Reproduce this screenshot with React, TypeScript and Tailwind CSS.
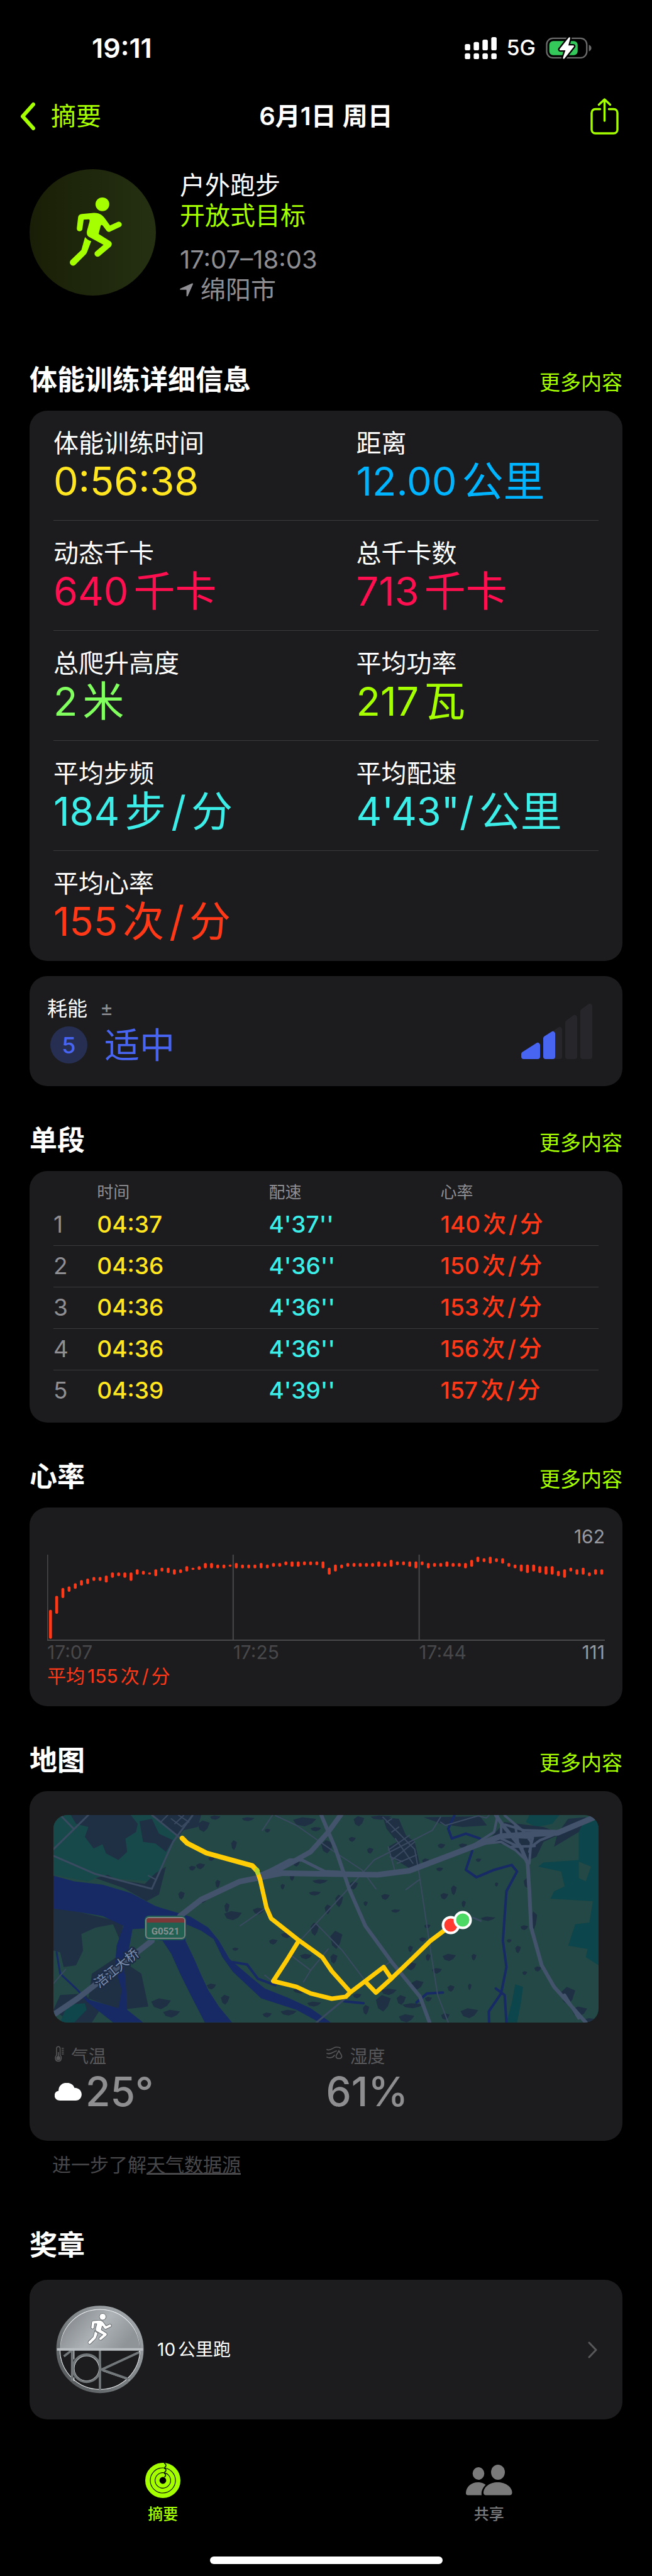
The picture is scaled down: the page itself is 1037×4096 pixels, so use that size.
import type { ReactNode } from 'react';
import clsx from 'clsx';

interface Metric {
  label: string;
  value: string;
  unit?: string[];
  color: string;
}

const metrics: Metric[] = [
  { label: '体能训练时间', value: '0:56:38', color: 'text-[#ffe620]' },
  { label: '距离', value: '12.00', unit: ['公里'], color: 'text-[#00b4ff]' },
  { label: '动态千卡', value: '640', unit: ['千卡'], color: 'text-[#ff0f4f]' },
  { label: '总千卡数', value: '713', unit: ['千卡'], color: 'text-[#ff0f4f]' },
  { label: '总爬升高度', value: '2', unit: ['米'], color: 'text-[#80ff5f]' },
  { label: '平均功率', value: '217', unit: ['瓦'], color: 'text-[#a6ff00]' },
  { label: '平均步频', value: '184', unit: ['步', '/', '分'], color: 'text-[#3deee8]' },
  { label: '平均配速', value: '4\'43"/', unit: ['公里'], color: 'text-[#3deee8]' },
  { label: '平均心率', value: '155', unit: ['次', '/', '分'], color: 'text-[#ff3818]' },
];

const splits = [
  { time: '04:37', pace: "4'37''", bpm: 140 },
  { time: '04:36', pace: "4'36''", bpm: 150 },
  { time: '04:36', pace: "4'36''", bpm: 153 },
  { time: '04:36', pace: "4'36''", bpm: 156 },
  { time: '04:39', pace: "4'39''", bpm: 157 },
];

// [high, low] bpm for each time slot
const heartRate = [
  [128, 111], [137, 127], [142, 137], [143, 141], [145, 143], [147, 145], [148, 146], [149, 148], [149, 148],
  [150, 147], [152, 150], [152, 151], [152, 150], [152, 148], [154, 152], [153, 152], [152, 152], [154, 151],
  [155, 154], [155, 153], [154, 152], [154, 153], [156, 154], [155, 155], [156, 155], [158, 156], [158, 156],
  [157, 156], [157, 156], [157, 157], [158, 156], [157, 156], [157, 156], [157, 156], [158, 156], [157, 156],
  [158, 157], [158, 157], [159, 158], [159, 157], [159, 157], [159, 158], [159, 158], [159, 158], [159, 156],
  [155, 152], [157, 154], [157, 156], [158, 157], [158, 157], [158, 157], [158, 157], [158, 157], [159, 157],
  [158, 157], [160, 157], [159, 158], [159, 158], [159, 157], [159, 156], [159, 158], [158, 156], [158, 157],
  [158, 157], [159, 157], [158, 157], [158, 157], [158, 156], [160, 157], [162, 160], [161, 160], [162, 159],
  [161, 160], [161, 159], [158, 157], [157, 156], [157, 154], [157, 153], [157, 154], [156, 153], [156, 152],
  [156, 152], [153, 151], [154, 150], [155, 154], [154, 152], [155, 152], [152, 151], [154, 152], [154, 152],
];

// small built-up areas on the map: x, y, width, height
const blocks = [
  [420, 70, 34, 70], [455, 40, 30, 26], [545, 50, 36, 24], [515, 190, 16, 60], [450, 290, 18, 26], [415, 330, 26, 36],
  [690, 50, 66, 56], [740, 110, 30, 26], [862, 44, 30, 62], [910, 40, 60, 26], [770, 190, 34, 80], [395, 345, 20, 30],
  [470, 430, 14, 50], [365, 500, 18, 50], [422, 545, 24, 26], [496, 570, 14, 60], [495, 620, 50, 56], [576, 600, 34, 40],
  [680, 378, 16, 60], [655, 455, 12, 34], [745, 428, 44, 26], [735, 500, 34, 26], [810, 520, 22, 76], [780, 580, 18, 60],
  [740, 690, 24, 80], [796, 740, 34, 110], [656, 750, 34, 34], [622, 790, 24, 34], [710, 880, 34, 32], [518, 842, 18, 20],
  [850, 440, 24, 50], [880, 380, 40, 24], [940, 516, 24, 36], [968, 610, 26, 20], [890, 560, 12, 30], [1096, 355, 20, 24],
  [1138, 464, 16, 60], [1108, 510, 22, 40], [1168, 556, 12, 42], [1160, 210, 24, 26], [1100, 210, 22, 30], [1262, 446, 10, 26],
  [1344, 420, 20, 60], [1364, 622, 18, 110], [1335, 706, 22, 30], [1222, 654, 42, 26], [1062, 700, 18, 26], [1048, 780, 20, 26],
  [1016, 830, 14, 40], [1066, 880, 14, 44], [1114, 880, 38, 44], [1196, 880, 14, 40], [1296, 790, 14, 22], [1320, 830, 16, 46],
  [1010, 930, 30, 50], [1084, 966, 28, 34], [1340, 985, 14, 24], [1026, 1040, 34, 56], [1128, 1070, 20, 40], [1186, 1060, 10, 40],
  [940, 1090, 44, 40], [925, 1130, 42, 100], [984, 1130, 26, 60], [1000, 1180, 60, 30], [888, 1190, 18, 60], [860, 1120, 24, 30],
  [1165, 1210, 50, 60], [1110, 1240, 24, 40], [990, 1246, 44, 50], [655, 1220, 46, 34], [604, 1236, 26, 30], [486, 1128, 24, 60],
  [446, 1060, 26, 36], [414, 1020, 12, 40], [288, 1150, 56, 66], [322, 1220, 48, 46], [690, 1090, 44, 30], [730, 1170, 40, 30],
  [1374, 956, 20, 32], [1450, 1080, 40, 110], [1480, 1200, 44, 60], [1516, 1270, 30, 26], [610, 120, 16, 24], [690, 310, 20, 40],
  [1056, 300, 20, 36], [900, 236, 18, 36], [848, 170, 20, 30], [1208, 300, 16, 22], [1064, 1140, 20, 30], [796, 880, 20, 60],
];

function SectionHeader({ title, more = true }: { title: string; more?: boolean }) {
  return (
    <div className="flex items-baseline justify-between">
      <h2 className="text-[44px] leading-[52px] font-bold">{title}</h2>
      {more && (
        <a href="#" className="text-[33px] leading-[52px] text-[#a6ff00]">
          更多内容
        </a>
      )}
    </div>
  );
}

function Card({ className, children }: { className?: string; children: ReactNode }) {
  return <div className={clsx('rounded-[28px] bg-[#1c1c1e]', className)}>{children}</div>;
}

const RUNNER_BODY =
  'M103 161L175 154C210 152 232 170 243 188L274 231L322 209C340 201 356 227 338 239L275 268C265 273 257 268 252 261L231 233C226 226 219 227 217 235L205 283L275 327C288 335 288 352 277 361L210 418C192 430 170 408 185 391L235 349L147 301C134 293 131 278 134 264L150 205C151 198 149 194 144 194L114 195L106 252C104 272 72 272 72 249L80 180C82 168 90 162 103 161Z';
const RUNNER_LEG =
  'M122 302C130 313 145 324 160 327L135 392C133 398 130 403 126 407L62 471C44 486 20 462 34 443L100 380Z';

function RunnerShape() {
  return (
    <>
      <circle cx="228" cy="102" r="42" />
      <path d={RUNNER_BODY} />
      <path d={RUNNER_LEG} />
    </>
  );
}

function StatusBar() {
  return (
    <div className="flex h-[132px] items-center justify-between pt-5 pr-24 pl-[146px]">
      <span className="text-[43px] leading-[48px] font-semibold">19:11</span>
      <div className="flex items-center gap-4">
        <svg width="51" height="35" viewBox="50 72 196 135" fill="#fff">
          <rect x="51" y="114" width="33" height="39" rx="10" />
          <rect x="105" y="102" width="33" height="51" rx="10" />
          <rect x="159" y="87" width="33" height="66" rx="10" />
          <rect x="213" y="72" width="33" height="81" rx="10" />
          <rect x="51" y="171" width="33" height="36" rx="10" />
          <rect x="105" y="171" width="33" height="36" rx="10" />
          <rect x="159" y="171" width="33" height="36" rx="10" />
          <rect x="213" y="171" width="33" height="36" rx="10" />
        </svg>
        <span className="text-[34px] leading-[48px] font-medium">5G</span>
        <svg width="73" height="35" viewBox="555 72 280 135">
          <rect x="560" y="79" width="246" height="120" rx="38" fill="none" stroke="#6b6b6b" strokeWidth="9" />
          <path d="M819 119C829 123 834 130 834 139C834 149 829 156 819 160Z" fill="#6b6b6b" />
          <rect x="576" y="96" width="174" height="87" rx="24" fill="#34c759" />
          <path
            d="M695 75C700 70 706 73 704 80L693 123H722C728 123 729 128 726 132L670 202C665 208 658 205 660 198L675 153H645C638 153 637 147 641 143Z"
            fill="#fff"
            stroke="#000"
            strokeWidth="18"
            strokeLinejoin="round"
            paintOrder="stroke"
          />
        </svg>
      </div>
    </div>
  );
}

function NavBar() {
  return (
    <nav className="grid h-[106px] grid-cols-[1fr_auto_1fr] items-center text-[40px] leading-[48px]">
      <button className="flex items-center gap-6 pl-8 text-[#a6ff00]">
        <svg width="25" height="46" viewBox="0 0 25 46" fill="none" stroke="currentColor" strokeWidth="6" strokeLinecap="round" strokeLinejoin="round">
          <path d="M21 4L4 23L21 42" />
        </svg>
        摘要
      </button>
      <h1 className="font-semibold">6月1日 周日</h1>
      <button aria-label="分享" className="mr-[53px] justify-self-end text-[#a6ff00]">
        <svg width="45" height="58" viewBox="0 0 45 58" fill="none" stroke="currentColor" strokeWidth="3.4" strokeLinecap="round" strokeLinejoin="round">
          <path d="M15.500 17.500H8C4.500 17.500 2 20 2 23.500V50C2 53.500 4.500 56 8 56H37C40.500 56 43 53.500 43 50V23.500C43 20 40.500 17.500 37 17.500H29.500" />
          <path d="M22.500 36V2.500M13.500 10.500L22.500 2L31.500 10.500" />
        </svg>
      </button>
    </nav>
  );
}

function WorkoutHeader() {
  return (
    <header className="flex gap-[38px] px-[47px] pt-[31px]">
      <div className="flex size-[201px] items-center justify-center rounded-full bg-linear-to-r from-[#191f06] to-[#253012]">
        <svg width="102" height="141" viewBox="-24 3 390 540" fill="#a6ff00">
          <RunnerShape />
        </svg>
      </div>
      <div className="pt-[2px] text-[40px] leading-[48px]">
        <p>户外跑步</p>
        <p className="text-[#a6ff00]">开放式目标</p>
        <p className="mt-[22px] text-[#8e8e93]">17:07–18:03</p>
        <p className="flex items-center gap-3 text-[#8e8e93]">
          <svg width="21" height="22" viewBox="0 0 21 22" fill="currentColor">
            <path d="M19.500 0.600C20.600 0 21.300 0.900 20.900 2L12.700 20.600C12.200 21.800 10.600 21.500 10.600 20.200V11.400C10.600 11 10.400 10.800 10 10.800L1.300 10.700C0 10.700 -0.300 9.200 0.900 8.700Z" />
          </svg>
          绵阳市
        </p>
      </div>
    </header>
  );
}

function MetricCell({ label, value, unit, color }: Metric) {
  return (
    <div>
      <p className="text-[40px] leading-[48px]">{label}</p>
      <p className={clsx('flex gap-2 text-[63px] leading-[72px]', color)}>
        {value}
        {unit && (
          <span className="flex gap-2 text-[66px]">
            {unit.map((part) => (
              <span key={part}>{part}</span>
            ))}
          </span>
        )}
      </p>
    </div>
  );
}

function Metrics() {
  const rows = [0, 2, 4, 6, 8].map((i) => metrics.slice(i, i + 2));
  return (
    <Card className="mt-[19px] px-[38px]">
      {rows.map((row, i) => (
        <div
          key={row[0].label}
          className={clsx(
            'grid h-[175px] grid-cols-2 gap-x-24 border-[#3a3a3c] pt-7',
            i < rows.length - 1 && 'border-b',
          )}
        >
          {row.map((m) => (
            <MetricCell key={m.label} {...m} />
          ))}
        </div>
      ))}
    </Card>
  );
}

function Effort() {
  return (
    <Card className="mt-6 flex h-[175px] items-center justify-between pr-12 pl-7">
      <div className="pb-1">
        <p className="flex gap-5 text-[32px] leading-[40px]">
          耗能
          <span className="text-[#8e8e93]">±</span>
        </p>
        <p className="mt-2 ml-[5px] flex items-center gap-[27px] text-[#4865f2]">
          <span className="flex size-[59px] items-center justify-center rounded-full bg-[#262f52] text-[36px] font-medium">5</span>
          <span className="text-[56px] leading-[60px]">适中</span>
        </p>
      </div>
      <svg width="113" height="88" viewBox="0 0 113 88" strokeWidth="8" strokeLinejoin="round">
        <g fill="#27272b" stroke="#27272b">
          <path d="M39 55L61 41V84H39Z" />
          <path d="M74 30L85 22V84H74Z" />
          <path d="M98 12L109 4V84H98Z" />
        </g>
        <g fill="#4865f2" stroke="#4865f2">
          <path d="M4 80L26 66V84H4Z" />
          <path d="M39 55L50 48V84H39Z" />
        </g>
      </svg>
    </Card>
  );
}

function Splits() {
  return (
    <Card className="mt-[19px] px-[38px] pt-4 pb-[18px]">
      <table className="w-full table-fixed text-left">
        <thead>
          <tr className="h-[36px] text-[26px] leading-[36px] text-[#8e8e93]">
            <td className="w-[8%]" />
            <th className="w-[31.5%] font-normal">时间</th>
            <th className="w-[31.5%] font-normal">配速</th>
            <th className="font-normal">心率</th>
          </tr>
        </thead>
        <tbody>
          {splits.map((s, i) => (
            <tr key={i} className="h-[66px] border-b border-[#3a3a3c] text-[37px] leading-[48px] font-medium last:border-b-0">
              <td className="font-normal text-[#8e8e93]">{i + 1}</td>
              <td className="text-[#ffe620]">{s.time}</td>
              <td className="text-[#3deee8]">{s.pace}</td>
              <td className="text-[#ff3818]">
                <span className="flex gap-1">
                  {s.bpm}
                  <span>次</span>
                  <span>/</span>
                  <span>分</span>
                </span>
              </td>
            </tr>
          ))}
        </tbody>
      </table>
    </Card>
  );
}

function HeartRate() {
  return (
    <Card className="mt-[19px] px-7 py-7 text-[30px] leading-[36px]">
      <p className="text-right text-[#98989f]">162</p>
      <svg className="mt-[11px] h-[137px] w-full" viewBox="0 0 886 137" preserveAspectRatio="none">
        <path d="M0.500 0V137M295.500 0V137M591 0V137" stroke="#48484a" strokeWidth="2" />
        <path d="M0 136H886" stroke="#48484a" strokeWidth="2" />
        {heartRate.map(([high, low], i) => {
          const top = 3.3 + (162 - high) * 2.486;
          const bottom = 6.9 + (162 - low) * 2.486;
          return <rect key={i} x={3 + i * 9.84} y={top} width="4.600" height={bottom - top} rx="2" fill="#ff3818" />;
        })}
      </svg>
      <div className="grid grid-cols-3 text-[#48484a]">
        <span>17:07</span>
        <span>17:25</span>
        <span className="flex justify-between">
          17:44
          <span className="text-[#98989f]">111</span>
        </span>
      </div>
      <p className="flex gap-1 leading-[40px] text-[#ff3818]">
        <span>平均</span>
        <span>155</span>
        <span>次</span>
        <span>/</span>
        <span>分</span>
      </p>
    </Card>
  );
}

function RouteMap() {
  return (
    <svg className="h-[330px] w-full rounded-[22px] bg-[#234845]" viewBox="0 0 867 330" preserveAspectRatio="none">
      <g transform="scale(0.5611 0.2619) translate(-11 -37)" fill="none" strokeLinecap="round" strokeLinejoin="round">
        {/* parks and hills */}
        <path d="M11 37H375L345 240L300 450L280 440L200 425L150 400L110 440L11 400Z" fill="#17494a" />
        <path
          d="M1500 110L1557 60V950L1520 900L1525 850L1470 830L1490 700L1530 690L1540 560L1420 545L1430 500L1460 470L1450 380L1385 350L1400 325L1500 310Z"
          fill="#0c454b"
        />
        <path d="M1350 80L1360 37H1445L1425 90L1380 110Z" fill="#0f464b" />
        <path d="M1320 1065L1342 1080L1336 1180L1325 1296H1295L1310 1180Z" fill="#0c454b" />
        <path d="M1500 320L1535 350L1520 440L1500 420Z" fill="#234845" />

        {/* built-up ground */}
        <g fill="#1f3045">
          <path d="M60 37H230L250 90L245 140L215 180L220 260L195 310L160 270L150 215L125 240L100 170L110 110L75 90Z" />
          <path d="M255 75L290 60L310 150L350 190L330 260L300 210L265 200Z" />
          <path d="M285 37H430L420 110L380 130L365 170L330 100Z" />
          <path d="M130 420L165 400L190 430L270 455L300 390L330 350L310 520L275 560L210 480Z" />
          <path d="M11 590L210 690L200 800L180 700L130 720L90 760L95 860L75 950L40 960L30 870L11 860Z" />
          <path d="M120 1000L190 900L260 1000L280 1200L200 1220L110 1150Z" />
          <path d="M945 50L990 60L1010 160L1035 200L1050 340L1020 360L965 290L960 230L985 200L955 120Z" />
          <path d="M1060 50L1220 45L1240 100L1170 110L1110 90Z" />
          <path d="M1290 80L1400 110L1450 150L1400 200L1380 290L1350 320L1300 220L1240 200Z" />
          <path d="M1470 60L1520 50L1500 140L1430 230L1440 150Z" />
          <path d="M11 1220L30 1130L100 1120L140 1230L120 1296H60Z" />
          {blocks.map(([x, y, w, h], i) => (
            <path
              key={i}
              d={`M${x} ${y + h * 0.3}L${x + w * 0.4} ${y}L${x + w} ${y + h * 0.2}L${x + w * 0.8} ${y + h * 0.7}L${x + w * 0.5} ${y + h}L${x + w * 0.15} ${y + h * 0.8}Z`}
            />
          ))}
        </g>
        <path d="M50 1190L100 1180L105 1220L70 1296H30Z" fill="#0f464b" />

        {/* rivers */}
        <g fill="#172a66">
          <path d="M11 405L70 440L150 460L230 510L300 590L400 655L450 720L480 800L510 910L570 1020L610 1090L680 1150L740 1210L797 1296H765L700 1220L600 1150L560 1070L520 990L490 900L465 790L430 740L388 700L385 800L410 910L430 1010L450 1100L480 1200L517 1296H440L400 1130L370 1000L345 880L320 800L270 790V725L235 730L225 850L205 920L215 1020L220 1220L265 1296H180L105 1170L100 1150L195 1210L205 1100L185 960L190 830L210 710L150 650L80 625L11 605Z" />
        </g>
        <g stroke="#172a66">
          <path d="M20 870L30 1000L75 1090L110 1170" strokeWidth="3" vectorEffect="non-scaling-stroke" />
          <path d="M520 930L560 945L590 1030L640 1070" strokeWidth="4" vectorEffect="non-scaling-stroke" />
          <path d="M1148 37L1130 120L1140 180L1180 150L1220 180" strokeWidth="4" vectorEffect="non-scaling-stroke" />
          <path d="M1198 255L1180 370L1210 415L1260 370L1310 340L1325 380L1295 500L1285 800L1295 960L1280 1120L1245 1230L1246 1296" strokeWidth="4" vectorEffect="non-scaling-stroke" />
          <path d="M1265 1090L1290 1130L1295 1296" strokeWidth="4" vectorEffect="non-scaling-stroke" />
          <path d="M1040 1175L1070 1120L1115 1115M835 1168L890 1180" strokeWidth="4" vectorEffect="non-scaling-stroke" />
        </g>

        {/* minor roads */}
        <g stroke="#3a4a60">
          <path d="M11 285L130 395L290 485L350 200L405 40M290 37L372 180M11 245L110 37M30 37L68 120" strokeWidth="3" vectorEffect="non-scaling-stroke" />
          <path d="M315 80L335 37M345 60L375 108L400 60M355 90L380 40M365 37L395 80" strokeWidth="2" vectorEffect="non-scaling-stroke" />
          <path d="M632 37L603 130M640 40L700 100L800 250L885 370L925 485M1108 50L1085 130L920 310L840 500L710 800" strokeWidth="2" vectorEffect="non-scaling-stroke" />
          <path d="M608 608L540 710M757 700L830 860L890 1030M685 890L740 980L720 1050M740 980L790 850M610 1010L640 1060" strokeWidth="2" vectorEffect="non-scaling-stroke" />
          <path d="M945 50L1035 245L1048 400L1080 860L1100 1130L1130 1296M1048 430L1010 490M960 230L978 370" strokeWidth="2" vectorEffect="non-scaling-stroke" />
          <path d="M960 250L1020 160M970 310L1035 200M985 330L1040 280M980 180L1030 330M965 290L1000 320M955 80L970 60M970 140L990 110" strokeWidth="2" vectorEffect="non-scaling-stroke" />
          <path d="M1108 80L1122 100L1215 42L1238 55L1246 37M970 920L945 960M45 975L11 1060M280 405L302 430" strokeWidth="2" vectorEffect="non-scaling-stroke" />
          <path d="M850 1130L757 1296M1200 660L1222 680" strokeWidth="3" vectorEffect="non-scaling-stroke" />
        </g>

        {/* highways */}
        <g stroke="#44536c">
          <path d="M11 1250L80 1150L140 1050L290 800M370 650L430 550L540 440L660 390L930 400L1020 375L1100 310L1210 220L1280 165L1440 145L1545 50" strokeWidth="9" vectorEffect="non-scaling-stroke" />
          <path d="M770 37L810 240L850 490L895 710L970 930L1050 1140L1077 1296" strokeWidth="6" vectorEffect="non-scaling-stroke" />
          <path d="M825 37L790 140L740 260L690 320L600 400" strokeWidth="8" vectorEffect="non-scaling-stroke" />
          <path d="M715 310L780 380L830 385M600 400L680 310H715M640 385L710 305" strokeWidth="5" vectorEffect="non-scaling-stroke" />
          <path d="M1265 37L1285 100L1335 230L1355 330L1360 500L1365 720L1395 950L1430 1080L1520 1296" strokeWidth="6" vectorEffect="non-scaling-stroke" />
          <path d="M1460 1130L1500 1270" strokeWidth="5" vectorEffect="non-scaling-stroke" />
          <path d="M1190 235L1260 140L1270 40M1290 40L1340 130L1365 200L1360 330M1280 90L1280 180L1340 240M1290 95L1345 130L1450 135M1365 230L1390 190L1450 140M1310 230L1375 225M1320 100L1330 230M1210 215L1280 200L1320 250L1350 310M1270 165L1370 175L1360 260" strokeWidth="4" vectorEffect="non-scaling-stroke" />
        </g>

        {/* recorded route */}
        <g stroke="#ffcc05" strokeWidth="7">
          <path d="M376 178L390 208L445 268L575 345L588 375" strokeWidth="8" vectorEffect="non-scaling-stroke" />
          <path d="M588 375L597 430L615 600L628 665L705 795L773 900L800 985L852 1110" vectorEffect="non-scaling-stroke" />
          <path d="M705 805L672 920L634 1045L700 1080L740 1120L800 1152L840 1140L852 1115L895 1045L947 960L969 1030L925 1115L898 1055" vectorEffect="non-scaling-stroke" />
          <path d="M969 1030L1030 905L1080 800L1130 720" vectorEffect="non-scaling-stroke" />
          <path d="M588 370L590 388" stroke="#b5d32a" vectorEffect="non-scaling-stroke" />
        </g>
      </g>

      <circle cx="632" cy="175" r="12.500" fill="#ff3b30" stroke="#fff" strokeWidth="4" />
      <circle cx="651" cy="167" r="12.500" fill="#4cd964" stroke="#fff" strokeWidth="4" />

      <rect x="145" y="160" width="66" height="39" rx="7" fill="#1d5a50" />
      <rect x="147" y="163" width="62" height="33" rx="5" fill="#226052" stroke="#7d8283" strokeWidth="2" />
      <path d="M148 171V167C148 165 150 164 152 164H204C206 164 208 165 208 167V171Z" fill="#7b3638" />
      <text x="178" y="190" textAnchor="middle" className="font-['Roboto'] text-[15px] font-bold" fill="#8b9192">
        G0521
      </text>
      <text
        x="100"
        y="251"
        textAnchor="middle"
        transform="rotate(-39 100 243)"
        className="text-[21px]"
        fill="#7c8dab"
        stroke="#1c2b45"
        strokeWidth="4"
        paintOrder="stroke"
      >
        涪江大桥
      </text>
    </svg>
  );
}

function MapCard() {
  return (
    <Card className="mt-[19px] px-[38px] pt-[38px] pb-[42px]">
      <RouteMap />
      <div className="mt-9 grid grid-cols-2">
        <div>
          <p className="flex items-center gap-[10px] pl-[2px] text-[28px] leading-[36px] text-[#58585a]">
            <svg className="mb-2" width="16" height="26" viewBox="0 0 16 26" fill="none" stroke="currentColor" strokeWidth="1.500">
              <path d="M3 15V4C3 0.200 8.600 0.200 8.600 4V15C11.600 17 11.200 24.500 5.800 24.500C0.400 24.500 0 17 3 15Z" />
              <circle cx="5.800" cy="19.500" r="2.600" fill="currentColor" />
              <path d="M5.800 10V19M11 4H14.500M11 7H14.500M11 10H14.500M11 13H14.500" />
            </svg>
            气温
          </p>
          <p className="mt-[2px] flex items-center gap-[6px] pl-[2px] text-[64px] leading-[72px] font-medium text-[#8e8e91]">
            <svg width="43" height="28" viewBox="0 0 140 105" preserveAspectRatio="none" fill="#fff">
              <path d="M28 105C-8 105 -10 52 20 47C20 -12 90 -15 102 29C152 29 150 105 108 105Z" />
            </svg>
            25°
          </p>
        </div>
        <div>
          <p className="flex items-center gap-3 text-[28px] leading-[36px] text-[#58585a]">
            <svg className="mb-3" width="26" height="20" viewBox="0 0 26 20" fill="none" stroke="currentColor" strokeWidth="1.700" strokeLinecap="round">
              <path d="M1 5C6 8 11 1 16 1C19 1 21 1 22 2.500M1 11C6 13 8 10 16 7M1 17C5 18.500 10 18 13 14" />
              <path d="M20 7C22 11 24.500 13 24.500 15.500C24.500 20.500 15.500 20.500 15.500 15.500C15.500 13 18 11 20 7Z" />
            </svg>
            湿度
          </p>
          <p className="mt-[2px] text-[64px] leading-[72px] font-medium text-[#8e8e91]">61%</p>
        </div>
      </div>
    </Card>
  );
}

function Medal() {
  return (
    <svg width="140" height="140" viewBox="36 34 534 534" fill="none">
      <defs>
        <linearGradient id="medal-face" x1="0" y1="0" x2="1" y2="0.400">
          <stop offset="0" stopColor="#74787b" />
          <stop offset="0.600" stopColor="#aeb3b8" />
          <stop offset="1" stopColor="#8f9498" />
        </linearGradient>
        <linearGradient id="medal-rim" x1="0" y1="1" x2="1" y2="0">
          <stop offset="0" stopColor="#4c5052" />
          <stop offset="0.500" stopColor="#7e8386" />
          <stop offset="1" stopColor="#aab0b4" />
        </linearGradient>
      </defs>
      <path d="M50 300A253 253 0 0 1 556 300Z" fill="url(#medal-face)" />
      <circle cx="303" cy="300" r="243" stroke="#e8ebed" strokeWidth="5" />
      <path d="M56 294A247 247 0 0 1 550 294" stroke="#75797c" strokeWidth="12" />
      <circle cx="303" cy="300" r="255" stroke="url(#medal-rim)" strokeWidth="20" />
      <g stroke="#dfe3e6" strokeWidth="5">
        <path d="M145 305V360M145 470V492M316 418L545 312M320 430L482 486" />
        <circle cx="222" cy="415" r="76" />
      </g>
      <g stroke="#72777a" strokeWidth="14">
        <path d="M303 300V552M134 305V490M84 342L128 308M310 424L540 318M318 424L478 480" />
        <circle cx="222" cy="414" r="83" />
      </g>
      <path d="M42 300H564" stroke="#b9bec2" strokeWidth="15" />
      <g transform="translate(219 57) scale(0.440)" fill="#fff" stroke="#55595c" strokeWidth="14" paintOrder="stroke">
        <RunnerShape />
      </g>
    </svg>
  );
}

function Awards() {
  return (
    <Card className="mt-[29px]">
      <a href="#" className="flex h-[222px] items-center pr-10 pl-[42px] text-[28px] leading-[40px]">
        <Medal />
        <span className="flex gap-1 pl-[21px]">
          10<span>公里跑</span>
        </span>
        <svg className="ml-auto" width="15" height="27" viewBox="0 0 15 27" fill="none" stroke="#58585a" strokeWidth="3" strokeLinecap="round" strokeLinejoin="round">
          <path d="M2 2L13 13.500L2 25" />
        </svg>
      </a>
    </Card>
  );
}

function TabBar() {
  return (
    <nav className="grid grid-cols-2 pt-[69px] text-[24px] leading-[32px] font-medium">
      <button className="flex flex-col items-center gap-[10px] text-[#a6ff00]">
        <svg width="56" height="56" viewBox="0 0 56 56" fill="none">
          <g stroke="currentColor">
            <circle cx="28" cy="28" r="24.300" strokeWidth="7.400" />
            <circle cx="28" cy="28" r="16.200" strokeWidth="6.600" />
            <circle cx="28" cy="28" r="8.600" strokeWidth="6.400" />
          </g>
          <path d="M30 0.500C34 2 34 6 30.500 7.500M30 8.500C34 10 34 13 30.500 15M30 16.500C33.500 18 33 21 30.500 22.500" stroke="#000" strokeWidth="1.500" />
        </svg>
        摘要
      </button>
      <button className="flex flex-col items-center gap-[10px] text-[#7a7a7a]">
        <svg width="74" height="56" viewBox="0 -3 74 56" fill="currentColor">
          <ellipse cx="20" cy="14" rx="9.300" ry="10" />
          <ellipse cx="51" cy="12" rx="11" ry="12" />
          <path d="M3 48.500C1 48.500 0 47 0 45C0 35 9 28 19 28C24 28 28 29.500 31.500 32C27 36.500 24 42 25 48.500Z" />
          <path d="M32 48.500C29.500 48.500 28 47 28 44.500C28 35.500 38 28 50.500 28C63 28 73.500 35.500 73.500 44.500C73.500 47 72 48.500 69.500 48.500Z" />
        </svg>
        共享
      </button>
    </nav>
  );
}

export default function App() {
  return (
    <div className="min-h-screen bg-black font-['Inter','Noto_Sans_CJK_SC',sans-serif] text-white">
      <StatusBar />
      <NavBar />
      <WorkoutHeader />
      <main className="flex flex-col gap-[60px] px-[47px] pt-[93px]">
        <section>
          <SectionHeader title="体能训练详细信息" />
          <Metrics />
          <Effort />
        </section>
        <section>
          <SectionHeader title="单段" />
          <Splits />
        </section>
        <section>
          <SectionHeader title="心率" />
          <HeartRate />
        </section>
        <section>
          <SectionHeader title="地图" />
          <MapCard />
          <p className="mt-5 pl-9 text-[30px] leading-[36px] text-[#48484a]">
            进一步了解
            <a href="#" className="underline">
              天气数据源
            </a>
          </p>
        </section>
        <section className="pt-6">
          <SectionHeader title="奖章" more={false} />
          <Awards />
        </section>
      </main>
      <TabBar />
      <div className="mx-auto mt-[51px] h-3 w-[370px] rounded-full bg-white" />
      <div className="h-[19px]" />
    </div>
  );
}
